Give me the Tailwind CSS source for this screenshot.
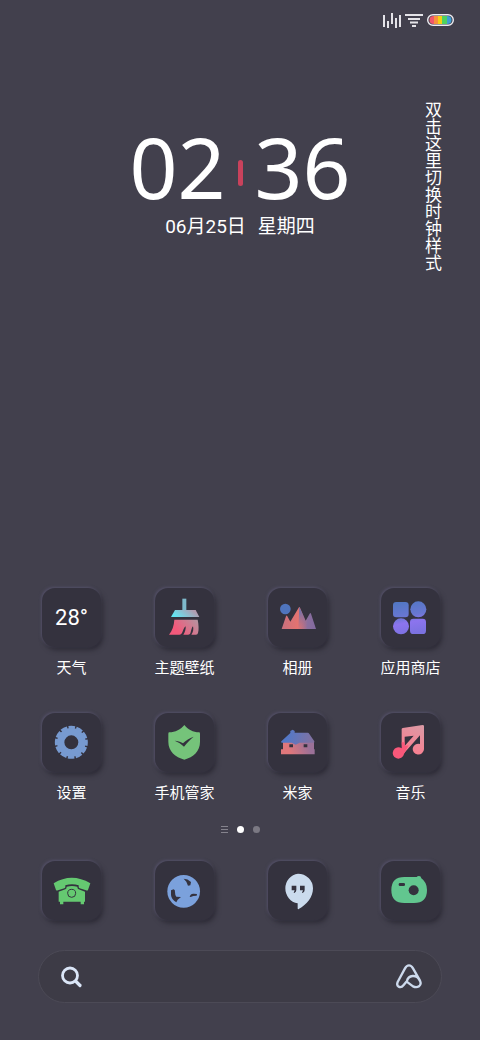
<!DOCTYPE html>
<html lang="zh-CN">
<head>
    <meta charset="UTF-8">
    <meta name="viewport" content="width=device-width, initial-scale=1.0">
    <title>桌面</title>
    <script src="https://cdn.jsdelivr.net/npm/@tailwindcss/browser@4"></script>
</head>
<body class="bg-[#42404d] text-white font-[Roboto,'Noto_Sans_CJK_SC',sans-serif]">
    <div class="min-h-screen flex flex-col">
        <!-- Status bar -->
        <header class="flex justify-end items-center gap-1 h-10 pr-[26px]">
            <svg class="w-[18px] h-4" viewBox="0 0 18 16" stroke="#e4e3e8" stroke-width="2">
                <path d="M1 3v12M5 9v7M9 1v11M13 6v10M17 3v12"/>
            </svg>
            <svg class="w-[18px] h-4" viewBox="0 0 18 16" stroke="#e4e3e8" stroke-width="2">
                <path d="M0 3h18M3 7h12M5 10.500h8M7 14h4"/>
            </svg>
            <svg class="w-[27px] h-3" viewBox="0 0 27 12">
                <defs>
                    <clipPath id="cell"><rect x="2.500" y="2" width="22" height="8" rx="4"/></clipPath>
                </defs>
                <rect x=".7" y=".7" width="25.600" height="10.600" rx="5.300" fill="#42404d" stroke="#eeedf2" stroke-width="1.400"/>
                <g clip-path="url(#cell)">
                    <path d="M2 2h5v8H2z" fill="#f2586b"/>
                    <path d="M7 2h4v8H7z" fill="#f8913f"/>
                    <path d="M11 2h4v8h-4z" fill="#f5d016"/>
                    <path d="M15 2h5v8h-5z" fill="#4fd35f"/>
                    <path d="M20 2h5v8h-5z" fill="#3e9fd6"/>
                </g>
            </svg>
        </header>

        <!-- Clock -->
        <section class="grid grid-cols-[1fr_auto_1fr] items-start pt-[61px]">
            <div class="col-start-2 flex flex-col items-center gap-[6px] pt-[22px]">
                <time class="flex items-center gap-3 h-[88px] text-[84px] leading-[88px] font-['Noto_Sans',sans-serif]">
                    <span>02</span>
                    <span class="w-[5px] h-[26px] mt-3 rounded-sm bg-[#c9425c]"></span>
                    <span>36</span>
                </time>
                <p class="flex gap-3 text-[19px] leading-5"><span>06月25日</span><span>星期四</span></p>
            </div>
            <button class="justify-self-end mr-[39px] [writing-mode:vertical-rl] text-[17px] leading-[18px] whitespace-nowrap">双击这里切换时钟样式</button>
        </section>

        <main class="mt-auto">
            <!-- Apps -->
            <nav class="grid grid-cols-4 gap-y-[35px] pl-[15px] pr-[13px] text-[15px] leading-5">
                <a href="#" class="flex flex-col items-center gap-[11px]">
                    <span class="size-[59px] rounded-[13px] bg-[#34323e] shadow-[-1px_-1px_3px_#545169,2px_3px_5px_#2c2a35] flex items-center justify-center text-[22px]">28°</span>
                    <span>天气</span>
                </a>
                <a href="#" class="flex flex-col items-center gap-[11px]">
                    <span class="size-[59px] rounded-[13px] bg-[#34323e] shadow-[-1px_-1px_3px_#545169,2px_3px_5px_#2c2a35]">
                        <svg class="size-full" viewBox="-3 -3 177 177">
                            <defs>
                                <linearGradient id="broomTop" x1="0" y1="1" x2="1" y2=".7"><stop offset=".15" stop-color="#62e6f4"/><stop offset="1" stop-color="#b29aae"/></linearGradient>
                                <linearGradient id="broomEnd" x1="0" y1=".6" x2="1" y2=".2"><stop offset=".2" stop-color="#f3597b"/><stop offset="1" stop-color="#b7929f"/></linearGradient>
                            </defs>
                            <path fill="#7fb9cb" d="M79 29h12v36H79z"/>
                            <path fill="url(#broomTop)" d="M57 63h62l11 21H45z"/>
                            <path fill="url(#broomEnd)" d="M55 92h70c3 14 4 30 1 40q-1 5-6 5h-14c6-8 7-17 5-25-4 3-5 12-7 18-1 5-3 7-8 7H82c5-7 8-17 7-25-5 3-7 11-10 18-2 5-4 7-9 7H39c10-12 15-27 16-45z"/>
                        </svg>
                    </span>
                    <span>主题壁纸</span>
                </a>
                <a href="#" class="flex flex-col items-center gap-[11px]">
                    <span class="size-[59px] rounded-[13px] bg-[#34323e] shadow-[-1px_-1px_3px_#545169,2px_3px_5px_#2c2a35]">
                        <svg class="size-full" viewBox="-3 -3 177 177">
                            <defs>
                                <linearGradient id="hills"><stop offset="0" stop-color="#c8707e"/><stop offset=".5" stop-color="#e5736f"/><stop offset=".75" stop-color="#8b6f9e"/><stop offset="1" stop-color="#8269a0"/></linearGradient>
                                <linearGradient id="peak" x1="0" y1="0" x2=".4" y2="1"><stop offset="0" stop-color="#4573c4"/><stop offset="1" stop-color="#9c6d91" stop-opacity="0"/></linearGradient>
                            </defs>
                            <circle cx="49" cy="60" r="16" fill="#4f74bd"/>
                            <path fill="url(#hills)" d="M38 120L51 82q2-5 4 0l9 16L89 56q2-4 4 0l17 39 12-21q2-4 4 0l15 46z"/>
                            <path fill="url(#peak)" d="M91 54l19 41 12 25H88z"/>
                        </svg>
                    </span>
                    <span>相册</span>
                </a>
                <a href="#" class="flex flex-col items-center gap-[11px]">
                    <span class="size-[59px] rounded-[13px] bg-[#34323e] shadow-[-1px_-1px_3px_#545169,2px_3px_5px_#2c2a35]">
                        <svg class="size-full" viewBox="-3 -3 177 177">
                            <defs>
                                <linearGradient id="store" gradientUnits="userSpaceOnUse" x1="60" y1="38" x2="80" y2="136"><stop offset="0" stop-color="#5277c3"/><stop offset=".45" stop-color="#6977d2"/><stop offset=".65" stop-color="#8c74ee"/><stop offset="1" stop-color="#7b72e0"/></linearGradient>
                            </defs>
                            <g fill="url(#store)">
                                <rect x="33" y="39" width="47" height="46" rx="10"/>
                                <circle cx="109" cy="61" r="24"/>
                                <circle cx="57" cy="112" r="24"/>
                                <rect x="84" y="89" width="48" height="46" rx="10"/>
                            </g>
                        </svg>
                    </span>
                    <span>应用商店</span>
                </a>
                <a href="#" class="flex flex-col items-center gap-[11px]">
                    <span class="size-[59px] rounded-[13px] bg-[#34323e] shadow-[-1px_-1px_3px_#545169,2px_3px_5px_#2c2a35]">
                        <svg class="size-full" viewBox="-3 -1 177 177" fill="none" stroke="#779ad0">
                            <circle cx="85" cy="87" r="32" stroke-width="22"/>
                            <circle cx="85" cy="87" r="45" stroke-width="9" pathLength="48" stroke-dasharray="3.300 .7" stroke-dashoffset="1.600"/>
                        </svg>
                    </span>
                    <span>设置</span>
                </a>
                <a href="#" class="flex flex-col items-center gap-[11px]">
                    <span class="size-[59px] rounded-[13px] bg-[#34323e] shadow-[-1px_-1px_3px_#545169,2px_3px_5px_#2c2a35]">
                        <svg class="size-full" viewBox="-3 -1 177 177">
                            <path fill="#75c37a" d="M85 35C75 48 57 57 40 57q-3 0-3 4v24c0 29 21 46 48 54 27-8 47-25 47-54V61q0-4-3-4C112 57 95 48 85 35z"/>
                            <path fill="#34323e" d="M56 82c9 0 17 3 25 8 9-9 19-16 32-20-11 9-20 18-29 30-8-8-17-14-28-18z"/>
                        </svg>
                    </span>
                    <span>手机管家</span>
                </a>
                <a href="#" class="flex flex-col items-center gap-[11px]">
                    <span class="size-[59px] rounded-[13px] bg-[#34323e] shadow-[-1px_-1px_3px_#545169,2px_3px_5px_#2c2a35]">
                        <svg class="size-full" viewBox="-3 -1 177 177">
                            <defs>
                                <linearGradient id="roof" gradientUnits="userSpaceOnUse" x1="55" y1="70" x2="130" y2="90"><stop offset="0" stop-color="#5478c7"/><stop offset="1" stop-color="#82719f"/></linearGradient>
                                <linearGradient id="wall" gradientUnits="userSpaceOnUse" x1="60" y1="110" x2="115" y2="88"><stop offset="0" stop-color="#e0777b"/><stop offset="1" stop-color="#9b7198"/></linearGradient>
                            </defs>
                            <path fill="url(#wall)" d="M42 86h93v22h2v15H36v-15h6z"/>
                            <path fill="url(#roof)" d="M38 88q-3-1-1-4l27-25v-6l7-4 6 4v5h39q3 0 5 4l15 22q1 4-2 4H92l-12 6-12-6z"/>
                            <path fill="#34323e" d="M61 93h11v9H61zM104 93h11v9h-11z"/>
                        </svg>
                    </span>
                    <span>米家</span>
                </a>
                <a href="#" class="flex flex-col items-center gap-[11px]">
                    <span class="size-[59px] rounded-[13px] bg-[#34323e] shadow-[-1px_-1px_3px_#545169,2px_3px_5px_#2c2a35]">
                        <svg class="size-full" viewBox="-3 -1 177 177">
                            <defs>
                                <linearGradient id="note" x1="1" y1="0" x2=".6" y2="1"><stop offset="0" stop-color="#d99ba6"/><stop offset="1" stop-color="#fa7f90"/></linearGradient>
                            </defs>
                            <path fill="url(#note)" d="M59 47q0-2 3-3l60-9q4 0 4 3v70a17 16 0 1 1-12-16V66l-52 58-3-37zM68 70v28l27-31z" fill-rule="evenodd"/>
                            <path fill="#f9587a" d="M59 87h9v11l12-2-14 26a17 17 0 1 1-7-17z"/>
                        </svg>
                    </span>
                    <span>音乐</span>
                </a>
            </nav>

            <!-- Page indicator -->
            <div class="flex justify-center items-center gap-[9px] h-[58px] pb-[5px]">
                <svg class="w-[7px] h-[7px]" viewBox="0 0 7 7" stroke="#85838d"><path d="M0 .5h7M0 3.500h7M0 6.500h7"/></svg>
                <span class="size-[7px] rounded-full bg-white"></span>
                <span class="size-[7px] rounded-full bg-[#7b7983]"></span>
            </div>

            <!-- Dock -->
            <nav class="grid grid-cols-4 justify-items-center pl-[15px] pr-[13px]">
                <a href="#" aria-label="电话" class="size-[59px] rounded-[13px] bg-[#34323e] shadow-[-1px_-1px_3px_#545169,2px_3px_5px_#2c2a35]">
                    <svg class="size-full" viewBox="-3 0 177 177">
                        <path fill="#65c971" d="M32 67q54-33 110 0l-7 20q-2 3-6 1l-19-6q-3-1-3-5v-4q-20-6-40 0v4q0 4-3 5l-19 6q-4 2-6-1z"/>
                        <path fill="#65c971" d="M47 92l20-7q4-2 4-8 16-4 32 0 0 6 4 8l19 7v30h-3v8h-10v-8H61v8H51v-8h-4z"/>
                        <circle cx="86" cy="97" r="12" fill="none" stroke="#34323e" stroke-width="3"/>
                    </svg>
                </a>
                <a href="#" aria-label="浏览器" class="size-[59px] rounded-[13px] bg-[#34323e] shadow-[-1px_-1px_3px_#545169,2px_3px_5px_#2c2a35]">
                    <svg class="size-full" viewBox="-3 0 177 177">
                        <circle cx="83" cy="91" r="49" fill="#7ba1dc"/>
                        <g fill="#34323e">
                            <path d="M83 53q12 0 22 10l-2 10-7 1-5-12z"/>
                            <path d="M45 88l8-3q5 1 4 9 0 9 4 13l14 1-10 8-4 8q-15-9-16-22z"/>
                            <path d="M101 107q3-10 12-9l10 1-1 5-10 1-8 3z"/>
                        </g>
                    </svg>
                </a>
                <a href="#" aria-label="短信" class="size-[59px] rounded-[13px] bg-[#34323e] shadow-[-1px_-1px_3px_#545169,2px_3px_5px_#2c2a35]">
                    <svg class="size-full" viewBox="-3 0 177 177">
                        <path fill="#cbdbed" d="M87 38a45 44 0 0 1 45 44c0 26-18 49-43 62q-3 2-3-2v-15a44 45 0 0 1 1-89z"/>
                        <path fill="#34323e" d="M68 74h14v13q0 6-6 9l-2-1 3-7h-9zM93 74h14v13q0 6-6 9l-2-1 3-7h-9z"/>
                    </svg>
                </a>
                <a href="#" aria-label="相机" class="size-[59px] rounded-[13px] bg-[#34323e] shadow-[-1px_-1px_3px_#545169,2px_3px_5px_#2c2a35]">
                    <svg class="size-full" viewBox="-3 0 177 177">
                        <path fill="#62c68f" d="M67 48h37q2-3 7-3 6 0 7 7 17 12 17 35 0 39-39 39H67q-39 0-39-39t39-39z"/>
                        <circle cx="95" cy="88" r="15" fill="#34323e"/>
                        <rect x="50" y="66" width="19" height="9" rx="4" fill="#34323e"/>
                    </svg>
                </a>
            </nav>

            <!-- Search -->
            <form class="flex items-center h-[53px] mt-[30px] mb-[37px] mx-[38px] pl-5 pr-[18px] rounded-full border border-[#4c4a56] bg-[#3d3b46]">
                <button type="button" aria-label="搜索">
                    <svg class="size-6" viewBox="0 0 24 24" fill="none" stroke="#dbe6f8" stroke-linecap="round">
                        <circle cx="11" cy="10.500" r="7.500" stroke-width="2.800"/>
                        <path d="M17 16.500l4 4" stroke-width="3.200"/>
                    </svg>
                </button>
                <input type="text" aria-label="搜索内容" class="flex-1 min-w-0 h-full px-2 bg-transparent outline-none">
                <button type="button" aria-label="小爱同学">
                    <svg class="size-7" viewBox="0 3 84 84" fill="none" stroke="#ccd9ec" stroke-width="7" stroke-linecap="round" stroke-linejoin="round">
                        <path d="M34 59L26 69Q19 78 11 74 4 70 8 60L30 19q5-9 12-9t12 9l21 37q5 11-3 17-8 5-18 0L35 59Q39 43 53 42q16-1 22 15"/>
                    </svg>
                </button>
            </form>
        </main>
    </div>
</body>
</html>
